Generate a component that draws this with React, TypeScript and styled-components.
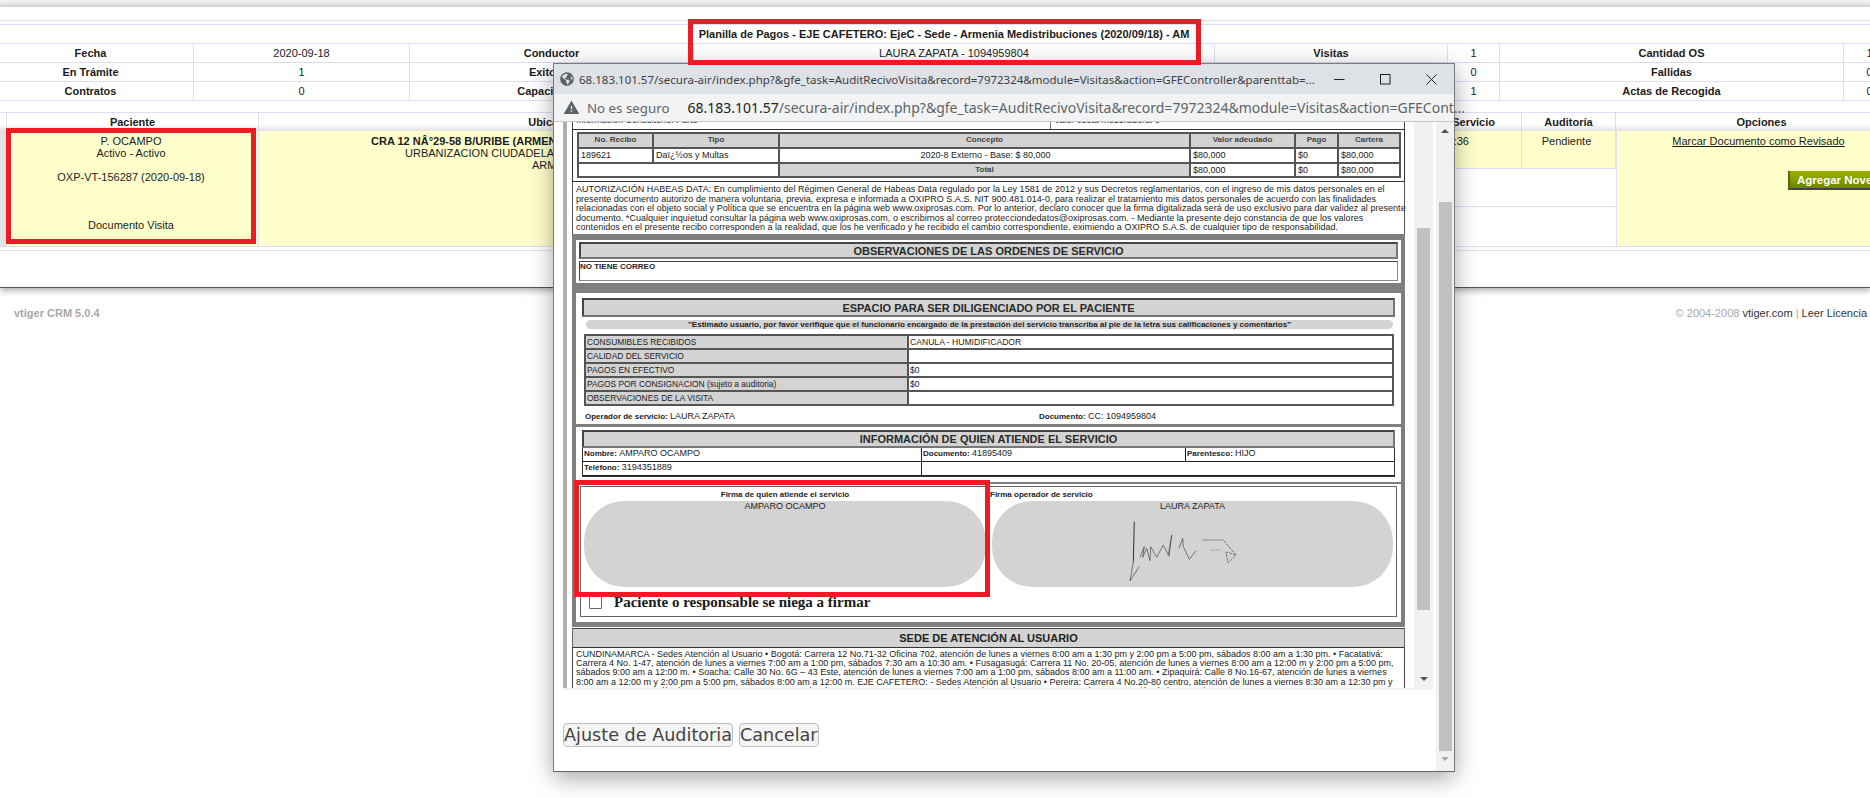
import React from "react";
import styled, { createGlobalStyle } from "styled-components";
import { FaGlobeAmericas } from "react-icons/fa";
import { MdWarning } from "react-icons/md";

const Global = createGlobalStyle`
  html, body { margin: 0; padding: 0; width: 1870px; height: 798px; overflow: hidden; background: #fff; }
  body { font-family: "Liberation Sans", Arial, sans-serif; font-size: 11px; color: #1c1c1c; }
  * { box-sizing: border-box; }
`;

const LAV = "#dcdcf8";

const Page = styled.div`
  position: relative;
  width: 1870px;
  height: 798px;
  overflow: hidden;
`;
const TopBar = styled.div`
  height: 7px;
  background: linear-gradient(#f4f4f4, #d9d9d9);
`;
const Main = styled.div`
  height: 281px;
  padding-top: 13px;
  border-bottom: 1px solid #555;
  box-shadow: 0 3px 6px rgba(0, 0, 0, 0.3);
`;
const Rule = styled.div<{ $color: string; $gap?: number }>`
  height: 1px;
  background: ${(p) => p.$color};
  margin-top: ${(p) => p.$gap ?? 0}px;
`;
const Title = styled.div`
  height: 18px;
  width: 1908px;
  margin-left: -12px;
  padding-left: 4px;
  text-align: center;
  font-weight: bold;
  line-height: 19px;
`;
const SummaryTable = styled.div`
  display: grid;
  width: 1908px;
  margin-left: -12px;
  grid-template-columns: 206px 216px 284px 521px 233px 52px 344px 52px;
  grid-auto-rows: 19px;
  border-top: 1px solid ${LAV};
`;
const SummaryCell = styled.div<{ $bold?: boolean }>`
  border-right: 1px solid ${LAV};
  border-bottom: 1px solid ${LAV};
  text-align: center;
  line-height: 18px;
  font-weight: ${(p) => (p.$bold ? "bold" : "normal")};
`;
const ListTable = styled.div`
  width: 1908px;
  margin-top: 11px;
  border-top: 1px solid ${LAV};
`;
const ListHead = styled.div`
  display: grid;
  grid-template-columns: 7px 252px 592px 543px 128px 94px 292px;
  height: 18px;
`;
const HeadCell = styled.div<{ $endPad?: number }>`
  border-right: 1px solid ${LAV};
  text-align: ${(p) => (p.$endPad ? "right" : "center")};
  padding-right: ${(p) => p.$endPad ?? 0}px;
  font-weight: bold;
  line-height: 18px;
  white-space: nowrap;
  background: linear-gradient(#fff 62%, #e2e2e2);
`;
const ListBody = styled.div`
  display: grid;
  grid-template-columns: 7px 252px 592px 765px 292px;
  height: 116px;
  border-bottom: 1px solid ${LAV};
`;
const GreyGutter = styled.div`
  background: #e2e2e2;
`;
const YellowCell = styled.div`
  background: #ffffcc;
  border-right: 1px solid ${LAV};
  padding-top: 4px;
  line-height: 12px;
`;
const PatientLine = styled.div<{ $gap?: number }>`
  text-align: center;
  padding-right: 3px;
  margin-top: ${(p) => p.$gap ?? 0}px;
`;
const AddressLine = styled.div<{ $indent: number; $bold?: boolean }>`
  padding-left: ${(p) => p.$indent}px;
  font-weight: ${(p) => (p.$bold ? "bold" : "normal")};
  white-space: nowrap;
`;
const MiddleCol = styled.div`
  display: grid;
  grid-template-rows: 38px 38px 39px;
`;
const MiddleRow = styled.div`
  display: grid;
  grid-template-columns: 1fr 94px;
  border-bottom: 1px solid ${LAV};
  &:last-child { border-bottom: 0; }
`;
const MiddleYellow = styled(YellowCell)<{ $endPad?: number }>`
  text-align: ${(p) => (p.$endPad ? "right" : "center")};
  padding-right: ${(p) => p.$endPad ?? 4}px;
  white-space: nowrap;
`;
const OptionsCell = styled(YellowCell)`
  border-left: 1px solid ${LAV};
  border-right: 0;
  text-align: center;
  padding-right: 8px;
`;
const OptionLink = styled.a`
  color: #1c1c1c;
  text-decoration: underline;
`;
const NoveltyRow = styled.div`
  margin-top: 24px;
  text-align: left;
  padding-left: 171px;
`;
const NoveltyButton = styled.button`
  height: 19px;
  width: 120px;
  padding: 0 0 0 7px;
  border: 0;
  border-left: 2px solid #5a6a00;
  border-bottom: 2px solid #444;
  background: linear-gradient(#9ab400, #6f8300);
  color: #fff;
  font: bold 11.5px "Liberation Sans", Arial, sans-serif;
  text-align: left;
  white-space: nowrap;
`;
const Footer = styled.div`
  display: flex;
  justify-content: space-between;
  padding: 19px 3px 0 14px;
  line-height: 13px;
  color: #a8a8a8;
`;
const FooterStrong = styled.span`
  font-weight: bold;
`;
const FooterLink = styled.span`
  color: #333;
`;

/* popup */
const Win = styled.div`
  position: absolute;
  left: 553px;
  top: 63px;
  width: 902px;
  height: 709px;
  background: #fff;
  border: 1px solid #7a7a7a;
  border-bottom-color: #666;
  box-shadow: 0 6px 22px rgba(0, 0, 0, 0.35);
  display: flex;
  flex-direction: column;
`;
const TitleBar = styled.div`
  height: 30px;
  flex: none;
  background: #dee1e6;
  display: flex;
  align-items: center;
  padding-left: 6px;
  color: #3c4043;
  font: 11.5px "Noto Sans", sans-serif;
  svg.globe { color: #5f6368; font-size: 14px; flex: none; }
`;
const TitleText = styled.div`
  margin-left: 5px;
  width: 735px;
  flex: none;
  white-space: nowrap;
`;
const WinButtons = styled.div`
  display: grid;
  grid-template-columns: 46px 46px 20px;
  margin-left: 20px;
  align-items: center;
  justify-items: start;
`;
const AddressBar = styled.div`
  height: 28px;
  flex: none;
  background: #f1f3f4;
  border-bottom: 1px solid #c9c9c9;
  display: flex;
  align-items: center;
  padding-left: 10px;
  color: #5f6368;
  font: 14px "Noto Sans", sans-serif;
  svg { color: #5f6368; font-size: 17px; flex: none; margin-left: -1px; }
`;
const Insecure = styled.span`
  margin-left: 7px;
  white-space: nowrap;
  font-size: 13.3px;
`;
const BarDivider = styled.span`
  width: 1px;
  height: 16px;
  background: #b8bbbf;
  margin-left: 8px;
`;
const UrlText = styled.span`
  margin-left: 10px;
  white-space: nowrap;
  b { font-weight: normal; color: #202124; }
`;
const WinBody = styled.div`
  flex: 1;
  display: flex;
  min-height: 0;
`;
const MainCol = styled.div`
  flex: 1;
  padding-left: 9px;
`;
const OuterScroll = styled.div`
  width: 18px;
  flex: none;
  background: #f1f1f1;
  display: flex;
  flex-direction: column;
  align-items: center;
  padding-top: 7px;
`;
const Arrow = styled.div<{ $down?: boolean; $light?: boolean }>`
  width: 0;
  height: 0;
  border-left: 4px solid transparent;
  border-right: 4px solid transparent;
  ${(p) => (p.$down ? "border-top" : "border-bottom")}: 4px solid ${(p) => (p.$light ? "#a8a8a8" : "#505050")};
`;
const OuterThumb = styled.div`
  width: 13px;
  height: 549px;
  margin-top: 69px;
  background: #c1c1c1;
`;
const OuterDown = styled(Arrow)`
  margin-top: 6px;
`;
const Frame = styled.div`
  display: flex;
  width: 870px;
  height: 568px;
  border-bottom: 2px solid #f1f1f1;
`;
const Strip = styled.div`
  width: 4px;
  flex: none;
  background: #aeaeae;
`;
const DocClip = styled.div`
  width: 847px;
  flex: none;
  padding-left: 5px;
  overflow: hidden;
`;
const Doc = styled.div`
  width: 833px;
  color: #222;
`;
const InnerScroll = styled.div`
  width: 19px;
  flex: none;
  background: #f1f1f1;
  display: flex;
  flex-direction: column;
  align-items: center;
`;
const InnerThumb = styled.div`
  width: 13px;
  height: 382px;
  margin-top: 106px;
  background: #c1c1c1;
`;
const InnerDown = styled(Arrow)`
  margin-top: 67px;
`;
const ClipRow = styled.div`
  height: 7px;
  overflow: hidden;
  display: grid;
  grid-template-columns: 477px 1fr;
  border-left: 1px solid #444;
  border-right: 1px solid #444;
  font-size: 9px;
  line-height: 11px;
`;
const ClipCell = styled.div<{ $rule?: boolean }>`
  height: 7px;
  overflow: hidden;
  padding-left: 3px;
  border-left: ${(p) => (p.$rule ? "1px solid #777" : "0")};
  white-space: nowrap;
`;
const ClipText = styled.div`
  margin-top: -7px;
`;
const ReceiptBox = styled.div`
  height: 53px;
  border: 1px solid #333;
  padding: 2px 3px 3px 4px;
`;
const ReceiptGrid = styled.div`
  display: grid;
  height: 46px;
  grid-template-columns: 73px 124px 409px 103px 41px 60px;
  grid-template-rows: 13px 13px 12px;
  gap: 2px;
  padding: 2px;
  background: #555;
`;
const GridHead = styled.div`
  background: #d3d3d3;
  font-size: 8px;
  font-weight: bold;
  color: #444;
  text-align: center;
  line-height: 11px;
`;
const GridCell = styled.div<{ $center?: boolean; $span?: number }>`
  background: #fff;
  font-size: 9px;
  line-height: 13px;
  padding-left: 2px;
  white-space: nowrap;
  overflow: hidden;
  text-align: ${(p) => (p.$center ? "center" : "left")};
  ${(p) => (p.$span ? `grid-column: span ${p.$span};` : "")}
`;
const Legal = styled.div`
  height: 52px;
  background: #fff;
  border-left: 1px solid #555;
  border-right: 1px solid #555;
  padding: 3px 0 0 3px;
  font-size: 9px;
  line-height: 9.5px;
  letter-spacing: 0.03px;
  color: #222;
`;
const LegalLine = styled.div`
  white-space: nowrap;
`;
const GreyFrame = styled.div`
  background: #7f7f7f;
  height: 393px;
  padding: 6px 4px 0;
`;
const WhiteBox = styled.div<{ $h: number; $top?: number; $pad: string }>`
  background: #fff;
  height: ${(p) => p.$h}px;
  margin-top: ${(p) => p.$top ?? 0}px;
  padding: ${(p) => p.$pad};
`;
const SectionHead = styled.div<{ $h: number }>`
  height: ${(p) => p.$h}px;
  background: #d3d3d3;
  border: 2px solid #444;
  border-color: #444 #777 #777 #444;
  font-size: 11px;
  font-weight: bold;
  color: #2a2a2a;
  text-align: center;
  line-height: ${(p) => p.$h - 3}px;
`;
const OutlineCell = styled.div`
  height: 20px;
  margin-top: 2px;
  border: 1px solid #444;
  border-right-color: #888;
  border-bottom-color: #888;
  font-size: 8px;
  line-height: 10px;
  font-weight: bold;
`;
const Banner = styled.div`
  height: 9px;
  margin: 3px 2px 0 4px;
  border-radius: 5px;
  background: #d3d3d3;
  font-size: 8px;
  font-weight: bold;
  line-height: 9px;
  text-align: center;
  white-space: nowrap;
`;
const LabelGrid = styled.div`
  display: grid;
  margin: 5px 1px 0 2px;
  grid-template-columns: 321px 1fr;
  grid-auto-rows: 12px;
  gap: 2px;
  padding: 2px;
  background: #555;
`;
const LabelKey = styled.div`
  background: #d3d3d3;
  font-size: 8.4px;
  line-height: 12px;
  padding-left: 1px;
  white-space: nowrap;
`;
const LabelValue = styled.div`
  background: #fff;
  font-size: 8.6px;
  line-height: 12px;
  padding-left: 1px;
`;
const OperatorRow = styled.div`
  display: grid;
  grid-template-columns: 454px 1fr;
  margin-top: 5px;
  padding-left: 3px;
  font-size: 8px;
  line-height: 10px;
  font-weight: bold;
  span { font-weight: normal; font-size: 9px; }
`;
const InfoGrid = styled.div`
  display: grid;
  grid-template-columns: 339px 264px 1fr;
  grid-auto-rows: 14px;
  border: 1px solid #333;
  border-top: 0;
`;
const InfoCell = styled.div<{ $span?: number }>`
  border-right: 1px solid #222;
  border-bottom: 1px solid #222;
  padding-left: 1px;
  font-size: 8px;
  font-weight: bold;
  line-height: 11px;
  white-space: nowrap;
  &:nth-child(3n) { border-right: 0; }
  span { font-weight: normal; font-size: 9px; }
  ${(p) => (p.$span ? `grid-column: span ${p.$span}; border-right: 0;` : "")}
`;
const SignBorder = styled.div`
  height: 131px;
  border: 1px solid #666;
  padding: 0 3px;
`;
const SignRow = styled.div`
  display: grid;
  grid-template-columns: 402px 401px;
  gap: 6px;
`;
const SignLabel = styled.div<{ $center?: boolean }>`
  height: 14px;
  font-size: 8px;
  font-weight: bold;
  line-height: 13px;
  padding-top: 1px;
  text-align: ${(p) => (p.$center ? "center" : "left")};
  margin-left: ${(p) => (p.$center ? 0 : -2)}px;
`;
const SignPad = styled.div`
  height: 86px;
  border-radius: 40px;
  background: #d3d3d3;
  display: flex;
  flex-direction: column;
  font-size: 9px;
  line-height: 10px;
  text-align: center;
`;
const SignArt = styled.svg`
  width: 115px;
  height: 66px;
  margin: 9px 0 0 136px;
  flex: none;
`;
const RefuseRow = styled.label`
  display: flex;
  align-items: center;
  margin-top: 7px;
  padding-left: 5px;
  font: bold 15px "Liberation Serif", serif;
  color: #1a1a1a;
`;
const Check = styled.span`
  width: 13px;
  height: 13px;
  border: 1px solid #666;
  border-radius: 1px;
  background: #fff;
  margin-right: 12px;
`;
const SedeHead = styled.div`
  height: 20px;
  margin-top: 1px;
  background: #d3d3d3;
  border-top: 1px solid #444;
  border-bottom: 1px solid #333;
  border-left: 1px solid #666;
  border-right: 1px solid #666;
  font-size: 11px;
  font-weight: bold;
  line-height: 18px;
  text-align: center;
`;
const SedeText = styled.div`
  border-left: 1px solid #444;
  border-right: 1px solid #444;
  padding: 2px 0 0 3px;
  font-size: 9px;
  line-height: 9.2px;
  height: 42px;
  overflow: hidden;
`;
const Actions = styled.div`
  display: flex;
  gap: 6px;
  margin-top: 33px;
`;
const AuditButton = styled.button`
  height: 24px;
  padding: 0;
  border: 1px solid #c0c0c0;
  border-radius: 4px;
  background: #f4f4f4;
  color: #444;
  font: 17.6px "DejaVu Sans", sans-serif;
  line-height: 20px;
  white-space: nowrap;
`;

const RedFrame = styled.div<{ $x: number; $y: number; $w: number; $h: number }>`
  position: absolute;
  left: ${(p) => p.$x}px;
  top: ${(p) => p.$y}px;
  width: ${(p) => p.$w}px;
  height: ${(p) => p.$h}px;
  border: 5px solid #ed1c24;
  pointer-events: none;
`;

const legal = [
  "AUTORIZACIÓN HABEAS DATA: En cumplimiento del Régimen General de Habeas Data regulado por la Ley 1581 de 2012 y sus Decretos reglamentarios, con el ingreso de mis datos personales en el",
  "presente documento autorizo de manera voluntaria, previa, expresa e informada a OXIPRO S.A.S. NIT 900.481.014-0, para realizar el tratamiento mis datos personales de acuerdo con las finalidades",
  "relacionadas con el objeto social y Política que se encuentra en la página web www.oxiprosas.com. Por lo anterior, declaro conocer que la firma digitalizada será de uso exclusivo para dar validez al presente",
  "documento. *Cualquier inquietud consultar la página web www.oxiprosas.com, o escribirnos al correo protecciondedatos@oxiprosas.com. - Mediante la presente dejo constancia de que los valores",
  "contenidos en el presente recibo corresponden a la realidad, que los he verificado y he recibido el cambio correspondiente, eximiendo a OXIPRO S.A.S. de cualquier tipo de responsabilidad.",
];
const sede = [
  "CUNDINAMARCA - Sedes Atención al Usuario • Bogotá: Carrera 12 No.71-32 Oficina 702, atención de lunes a viernes 8:00 am a 1:30 pm y 2:00 pm a 5:00 pm, sábados 8:00 am a 1:30 pm. • Facatativá:",
  "Carrera 4 No. 1-47, atención de lunes a viernes 7:00 am a 1:00 pm, sábados 7:30 am a 10:30 am. • Fusagasugá: Carrera 11 No. 20-05, atención de lunes a viernes 8:00 am a 12:00 m y 2:00 pm a 5:00 pm,",
  "sábados 9:00 am a 12:00 m. • Soacha: Calle 30 No. 6G – 43 Este, atención de lunes a viernes 7:00 am a 1:00 pm, sábados 8:00 am a 11:00 am. • Zipaquirá: Calle 8 No.16-67, atención de lunes a viernes",
  "8:00 am a 12:00 m y 2:00 pm a 5:00 pm, sábados 8:00 am a 12:00 m. EJE CAFETERO: - Sedes Atención al Usuario • Pereira: Carrera 4 No.20-80 centro, atención de lunes a viernes 8:30 am a 12:30 pm y",
  "2:00 pm a 6:00 pm, sábados 8:00 am a 12:00 m. • Dosquebradas: Carrera 24 No. 7-26 Zona Industrial La Badea Manzana 4 Bodega 1, atención de lunes a viernes 8:00 am a 12:00 m y 2:00 pm a 6:00 pm",
];
const summary: [string, boolean][] = [
  ["Fecha", true], ["2020-09-18", false], ["Conductor", true], ["LAURA ZAPATA - 1094959804", false], ["Visitas", true], ["1", false], ["Cantidad OS", true], ["1", false],
  ["En Trámite", true], ["1", false], ["Exitosas", true], ["", false], ["", true], ["0", false], ["Fallidas", true], ["0", false],
  ["Contratos", true], ["0", false], ["Capacitación", true], ["", false], ["", true], ["1", false], ["Actas de Recogida", true], ["0", false],
];

const Signature = () => (
  <SignArt viewBox="0 0 115 66" fill="none" stroke="#333" strokeWidth="0.6">
    <path d="M6.3 1.7 L5.3 41.7" strokeWidth="1" />
    <path d="M5.3 41.7 L2 61 L11 46.7 M12 37.3 L16.3 26.7 L14.7 37.3 L18.7 28.3 L22 40.7 L22.7 26.7 L28.7 37.3 L35.3 25 L40.3 35 L43.7 15 L41 36.7 M51 28.3 L54.7 18.3 L55.3 26.7 L61.3 39.3 L68 30.7" />
    <path d="M74 20 L96 20" stroke="#888" strokeWidth="1" />
    <path d="M82 30 L93 30" stroke="#aaa" strokeWidth="1" />
    <path d="M96 21 L108 35 L100 43 L98 32 L108 35" strokeDasharray="3 1" />
  </SignArt>
);

export default function App() {
  return (
    <Page>
      <Global />
      <TopBar />
      <Main>
        <Rule $color="#dddddd" />
        <Rule $color={LAV} $gap={3} />
        <Title>Planilla de Pagos - EJE CAFETERO: EjeC - Sede - Armenia Medistribuciones (2020/09/18) - AM</Title>
        <SummaryTable>
          {summary.map(([t, b], i) => (
            <SummaryCell key={i} $bold={b}>{t}</SummaryCell>
          ))}
        </SummaryTable>
        <ListTable>
          <ListHead>
            <HeadCell />
            <HeadCell>Paciente</HeadCell>
            <HeadCell>Ubicación</HeadCell>
            <HeadCell />
            <HeadCell $endPad={26}>Fecha Servicio</HeadCell>
            <HeadCell>Auditoría</HeadCell>
            <HeadCell>Opciones</HeadCell>
          </ListHead>
          <ListBody>
            <GreyGutter />
            <YellowCell>
              <PatientLine>P. OCAMPO</PatientLine>
              <PatientLine>Activo - Activo</PatientLine>
              <PatientLine $gap={12}>OXP-VT-156287 (2020-09-18)</PatientLine>
              <PatientLine $gap={36}>Documento Visita</PatientLine>
            </YellowCell>
            <YellowCell>
              <AddressLine $indent={112} $bold>CRA 12 NÂ°29-58 B/URIBE (ARMENIA)</AddressLine>
              <AddressLine $indent={146}>URBANIZACION CIUDADELA</AddressLine>
              <AddressLine $indent={273}>ARMENIA</AddressLine>
            </YellowCell>
            <MiddleCol>
              <MiddleRow>
                <MiddleYellow $endPad={52}>2020-09-18 12:36</MiddleYellow>
                <MiddleYellow>Pendiente</MiddleYellow>
              </MiddleRow>
              <MiddleRow />
              <MiddleRow />
            </MiddleCol>
            <OptionsCell>
              <OptionLink>Marcar Documento como Revisado</OptionLink>
              <NoveltyRow>
                <NoveltyButton>Agregar Novedad</NoveltyButton>
              </NoveltyRow>
            </OptionsCell>
          </ListBody>
        </ListTable>
        <Rule $color="#e2e2e2" $gap={3} />
      </Main>
      <Footer>
        <FooterStrong>vtiger CRM 5.0.4</FooterStrong>
        <span>© 2004-2008 <FooterLink>vtiger.com</FooterLink> | <FooterLink>Leer Licencia</FooterLink></span>
      </Footer>

      <Win>
        <TitleBar>
          <FaGlobeAmericas className="globe" />
          <TitleText>68.183.101.57/secura-air/index.php?&amp;gfe_task=AuditRecivoVisita&amp;record=7972324&amp;module=Visitas&amp;action=GFEController&amp;parenttab=...</TitleText>
          <WinButtons>
            <svg width="11" height="11" viewBox="0 0 11 11" stroke="#222" strokeWidth="1"><path d="M0 5.5H10.5" /></svg>
            <svg width="11" height="11" viewBox="0 0 11 11" stroke="#222" strokeWidth="1" fill="none"><rect x="0.5" y="0.5" width="9.5" height="9.5" /></svg>
            <svg width="11" height="11" viewBox="0 0 11 11" stroke="#222" strokeWidth="1"><path d="M0.5 0.5L10.5 10.5M10.5 0.5L0.5 10.5" /></svg>
          </WinButtons>
        </TitleBar>
        <AddressBar>
          <MdWarning />
          <Insecure>No es seguro</Insecure>
          <BarDivider />
          <UrlText><b>68.183.101.57</b>/secura-air/index.php?&amp;gfe_task=AuditRecivoVisita&amp;record=7972324&amp;module=Visitas&amp;action=GFECont...</UrlText>
        </AddressBar>
        <WinBody>
          <MainCol>
            <Frame>
              <Strip />
              <DocClip>
                <Doc>
                  <ClipRow>
                    <ClipCell><ClipText>Información Consultorio: Parte</ClipText></ClipCell>
                    <ClipCell $rule><ClipText>Valor cuota moderadora: 0</ClipText></ClipCell>
                  </ClipRow>
                  <ReceiptBox>
                    <ReceiptGrid>
                      <GridHead>No. Recibo</GridHead>
                      <GridHead>Tipo</GridHead>
                      <GridHead>Concepto</GridHead>
                      <GridHead>Valor adeudado</GridHead>
                      <GridHead>Pago</GridHead>
                      <GridHead>Cartera</GridHead>
                      <GridCell>189621</GridCell>
                      <GridCell>Daï¿½os y Multas</GridCell>
                      <GridCell $center>2020-8 Externo - Base: $ 80,000</GridCell>
                      <GridCell>$80,000</GridCell>
                      <GridCell>$0</GridCell>
                      <GridCell>$80,000</GridCell>
                      <GridCell $span={2} />
                      <GridHead>Total</GridHead>
                      <GridCell>$80,000</GridCell>
                      <GridCell>$0</GridCell>
                      <GridCell>$80,000</GridCell>
                    </ReceiptGrid>
                  </ReceiptBox>
                  <Legal>
                    {legal.map((l) => <LegalLine key={l}>{l}</LegalLine>)}
                  </Legal>
                  <GreyFrame>
                    <WhiteBox $h={43} $pad="2px 3px">
                      <SectionHead $h={17}>OBSERVACIONES DE LAS ORDENES DE SERVICIO</SectionHead>
                      <OutlineCell>NO TIENE CORREO</OutlineCell>
                    </WhiteBox>
                    <WhiteBox $h={131} $top={10} $pad="5px 6px">
                      <SectionHead $h={19}>ESPACIO PARA SER DILIGENCIADO POR EL PACIENTE</SectionHead>
                      <Banner>"Estimado usuario, por favor verifique que el funcionario encargado de la prestación del servicio transcriba al pie de la letra sus calificaciones y comentarios"</Banner>
                      <LabelGrid>
                        <LabelKey>CONSUMIBLES RECIBIDOS</LabelKey><LabelValue>CANULA - HUMIDIFICADOR</LabelValue>
                        <LabelKey>CALIDAD DEL SERVICIO</LabelKey><LabelValue />
                        <LabelKey>PAGOS EN EFECTIVO</LabelKey><LabelValue>$0</LabelValue>
                        <LabelKey>PAGOS POR CONSIGNACION (sujeto a auditoria)</LabelKey><LabelValue>$0</LabelValue>
                        <LabelKey>OBSERVACIONES DE LA VISITA</LabelKey><LabelValue />
                      </LabelGrid>
                      <OperatorRow>
                        <div>Operador de servicio: <span>LAURA ZAPATA</span></div>
                        <div>Documento: <span>CC: 1094959804</span></div>
                      </OperatorRow>
                    </WhiteBox>
                    <WhiteBox $h={55} $top={3} $pad="3px 6px 0">
                      <SectionHead $h={18}>INFORMACIÓN DE QUIEN ATIENDE EL SERVICIO</SectionHead>
                      <InfoGrid>
                        <InfoCell>Nombre: <span>AMPARO OCAMPO</span></InfoCell>
                        <InfoCell>Documento: <span>41895409</span></InfoCell>
                        <InfoCell>Parentesco: <span>HIJO</span></InfoCell>
                        <InfoCell>Teléfono: <span>3194351889</span></InfoCell>
                        <InfoCell $span={2} />
                      </InfoGrid>
                    </WhiteBox>
                    <WhiteBox $h={138} $top={2} $pad="2px 4px">
                      <SignBorder>
                        <SignRow>
                          <div>
                            <SignLabel $center>Firma de quien atiende el servicio</SignLabel>
                            <SignPad>AMPARO OCAMPO</SignPad>
                          </div>
                          <div>
                            <SignLabel>Firma operador de servicio</SignLabel>
                            <SignPad>LAURA ZAPATA<Signature /></SignPad>
                          </div>
                        </SignRow>
                        <RefuseRow><Check />Paciente o responsable se niega a firmar</RefuseRow>
                      </SignBorder>
                    </WhiteBox>
                  </GreyFrame>
                  <SedeHead>SEDE DE ATENCIÓN AL USUARIO</SedeHead>
                  <SedeText>
                    {sede.map((l) => <LegalLine key={l}>{l}</LegalLine>)}
                  </SedeText>
                </Doc>
              </DocClip>
              <InnerScroll>
                <InnerThumb />
                <InnerDown $down />
              </InnerScroll>
            </Frame>
            <Actions>
              <AuditButton>Ajuste de Auditoria</AuditButton>
              <AuditButton>Cancelar</AuditButton>
            </Actions>
          </MainCol>
          <OuterScroll>
            <Arrow />
            <OuterThumb />
            <OuterDown $down $light />
          </OuterScroll>
        </WinBody>
      </Win>

      <RedFrame $x={688} $y={19} $w={513} $h={46} />
      <RedFrame $x={6} $y={128} $w={250} $h={116} />
      <RedFrame $x={574} $y={480} $w={416} $h={117} />
    </Page>
  );
}
